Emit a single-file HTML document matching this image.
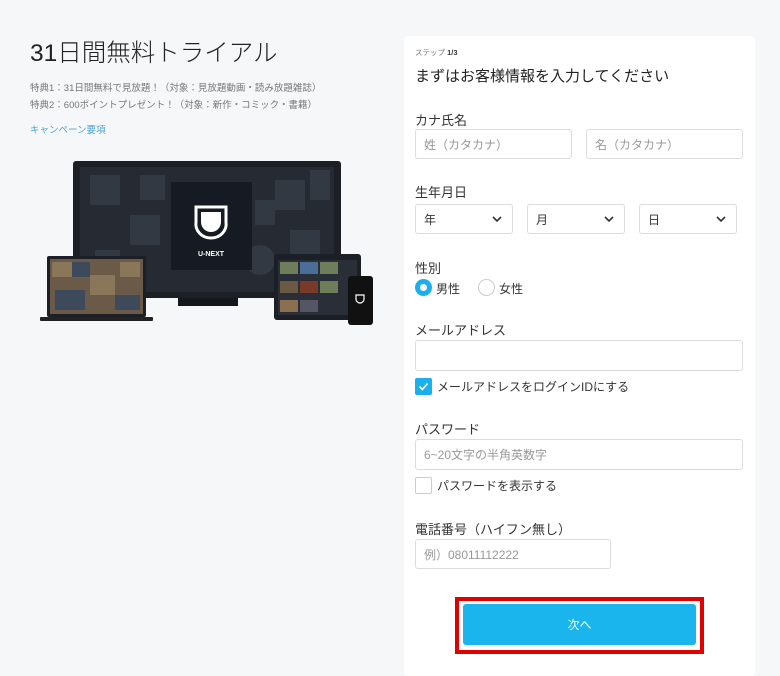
<!DOCTYPE html>
<html><head><meta charset="utf-8"><style>
*{box-sizing:border-box;margin:0;padding:0}
body{width:780px;height:660px;overflow:hidden;background:#f6f7f9;font-family:"Liberation Sans","Noto Sans CJK JP",sans-serif;color:#222;position:relative}
.a{position:absolute;white-space:nowrap}
.card{position:absolute;left:404px;top:36px;width:351px;height:640px;background:#fff;border-radius:4px}
.in{position:absolute;border:1px solid #dcdcdc;border-radius:3px;background:#fff;font-size:12px;color:#999;padding-left:8px;display:flex;align-items:center}
.lbl{font-size:13px;color:#333}
.sel{position:absolute;border:1px solid #dcdcdc;border-radius:3px;font-size:12px;color:#333;padding-left:8px;display:flex;align-items:center}
.sel svg{position:absolute;right:10px;top:11px}
</style></head><body>
<div class="a" style="left:30px;top:34px;font-size:24.5px;color:#222;font-weight:300">31日間無料トライアル</div>
<div class="a" style="left:30px;top:80px;font-size:9.5px;color:#777">特典1：31日間無料で見放題！（対象：見放題動画・読み放題雑誌）</div>
<div class="a" style="left:30px;top:97px;font-size:9.5px;color:#777">特典2：600ポイントプレゼント！（対象：新作・コミック・書籍）</div>
<div class="a" style="left:30px;top:122px;font-size:9.5px;color:#4aa3db">キャンペーン要項</div>
<svg class="a" style="left:40px;top:155px" width="340" height="175" viewBox="40 155 340 175">
<rect x="73" y="161" width="268" height="137" rx="3" fill="#1c1f26"/>
<rect x="80" y="167" width="254" height="125" fill="#252a33"/>
<g fill="#333943"><rect x="90" y="175" width="30" height="30"/><rect x="130" y="215" width="30" height="30"/><rect x="95" y="250" width="25" height="30"/><rect x="275" y="180" width="30" height="30"/><rect x="290" y="230" width="30" height="30"/><circle cx="260" cy="260" r="15"/><rect x="140" y="175" width="25" height="25"/><rect x="255" y="200" width="20" height="25"/><rect x="310" y="170" width="20" height="30"/></g>
<rect x="171" y="182" width="81" height="88" fill="#161a22"/>
<path d="M196 207 h30 v15 a15 14 0 0 1 -15 16 a15 14 0 0 1 -15 -16 z" fill="none" stroke="#fff" stroke-width="3"/>
<path d="M201 212 h20 v10 a10 10 0 0 1 -20 0z" fill="#fff"/>
<text x="211" y="256" font-size="7" fill="#fff" text-anchor="middle" font-weight="bold" font-family="Liberation Sans">U-NEXT</text>
<rect x="178" y="298" width="60" height="8" fill="#15181d"/>
<rect x="47" y="256" width="99" height="61" rx="2" fill="#1c1f26"/>
<rect x="50" y="259" width="93" height="55" fill="#6b5a48"/>
<g fill="#8a7658"><rect x="52" y="262" width="20" height="15"/><rect x="90" y="275" width="25" height="20"/><rect x="120" y="262" width="20" height="15"/></g>
<g fill="#3c4a5c"><rect x="72" y="262" width="18" height="15"/><rect x="55" y="290" width="30" height="20"/><rect x="115" y="295" width="25" height="15"/></g>
<rect x="40" y="317" width="113" height="4" rx="1" fill="#222"/>
<rect x="274" y="254" width="87" height="66" rx="3" fill="#1c1f26"/>
<rect x="278" y="260" width="79" height="55" fill="#2a2e36"/>
<g fill="#6f7d5b"><rect x="280" y="262" width="18" height="12"/><rect x="300" y="262" width="18" height="12" fill="#4a6e98"/><rect x="320" y="262" width="18" height="12"/><rect x="280" y="281" width="18" height="12" fill="#6a5a44"/><rect x="300" y="281" width="18" height="12" fill="#7a3a2a"/><rect x="320" y="281" width="18" height="12"/><rect x="280" y="300" width="18" height="12" fill="#8a7050"/><rect x="300" y="300" width="18" height="12" fill="#556"/></g>
<rect x="348" y="276" width="25" height="49" rx="3" fill="#111"/>
<path d="M356 295 h8 v4 a4 4 0 0 1 -8 0z" fill="none" stroke="#fff" stroke-width="1.2"/>
</svg>
<div class="card"></div>
<div class="a" style="left:415px;top:47px;font-size:7.5px;color:#777">ステップ <b style="color:#333">1/3</b></div>
<div class="a" style="left:415px;top:65px;font-size:15px;color:#222">まずはお客様情報を入力してください</div>
<div class="a lbl" style="left:415px;top:110px">カナ氏名</div>
<div class="in" style="left:415px;top:129px;width:157px;height:30px">姓（カタカナ）</div>
<div class="in" style="left:586px;top:129px;width:157px;height:30px">名（カタカナ）</div>
<div class="a lbl" style="left:415px;top:182px">生年月日</div>
<div class="sel" style="left:415px;top:204px;width:98px;height:30px">年<svg width="10" height="7"><path d="M1 1l4 4 4-4" fill="none" stroke="#333" stroke-width="1.6"/></svg></div>
<div class="sel" style="left:527px;top:204px;width:98px;height:30px">月<svg width="10" height="7"><path d="M1 1l4 4 4-4" fill="none" stroke="#333" stroke-width="1.6"/></svg></div>
<div class="sel" style="left:639px;top:204px;width:98px;height:30px">日<svg width="10" height="7"><path d="M1 1l4 4 4-4" fill="none" stroke="#333" stroke-width="1.6"/></svg></div>
<div class="a lbl" style="left:415px;top:258px">性別</div>
<div class="a" style="left:415px;top:279px;width:17px;height:17px;border-radius:50%;background:#1ab0ec"><div style="position:absolute;left:5px;top:5px;width:7px;height:7px;border-radius:50%;background:#fff"></div></div>
<div class="a" style="left:436px;top:280px;font-size:12px;color:#333">男性</div>
<div class="a" style="left:478px;top:279px;width:17px;height:17px;border-radius:50%;border:1px solid #ccc"></div>
<div class="a" style="left:499px;top:280px;font-size:12px;color:#333">女性</div>
<div class="a lbl" style="left:415px;top:320px">メールアドレス</div>
<div class="in" style="left:415px;top:340px;width:328px;height:31px"></div>
<div class="a" style="left:415px;top:378px;width:17px;height:17px;border-radius:2px;background:#1ab0ec"><svg width="17" height="17"><path d="M4.5 8.5l3 3 5-6" fill="none" stroke="#fff" stroke-width="1.6"/></svg></div>
<div class="a" style="left:437px;top:378px;font-size:12px;color:#333">メールアドレスをログインIDにする</div>
<div class="a lbl" style="left:415px;top:419px">パスワード</div>
<div class="in" style="left:415px;top:439px;width:328px;height:31px">6~20文字の半角英数字</div>
<div class="a" style="left:415px;top:477px;width:17px;height:17px;border-radius:2px;border:1px solid #ccc"></div>
<div class="a" style="left:437px;top:477px;font-size:12px;color:#333">パスワードを表示する</div>
<div class="a lbl" style="left:415px;top:519px">電話番号（ハイフン無し）</div>
<div class="in" style="left:415px;top:539px;width:196px;height:30px">例）08011112222</div>
<div class="a" style="left:455px;top:597px;width:249px;height:57px;border:4px solid #e00000"></div>
<div class="a" style="left:463px;top:604px;width:233px;height:41px;border-radius:3px;background:#1bb5ee;color:#fff;font-size:12px;display:flex;align-items:center;justify-content:center">次へ</div>
</body></html>
